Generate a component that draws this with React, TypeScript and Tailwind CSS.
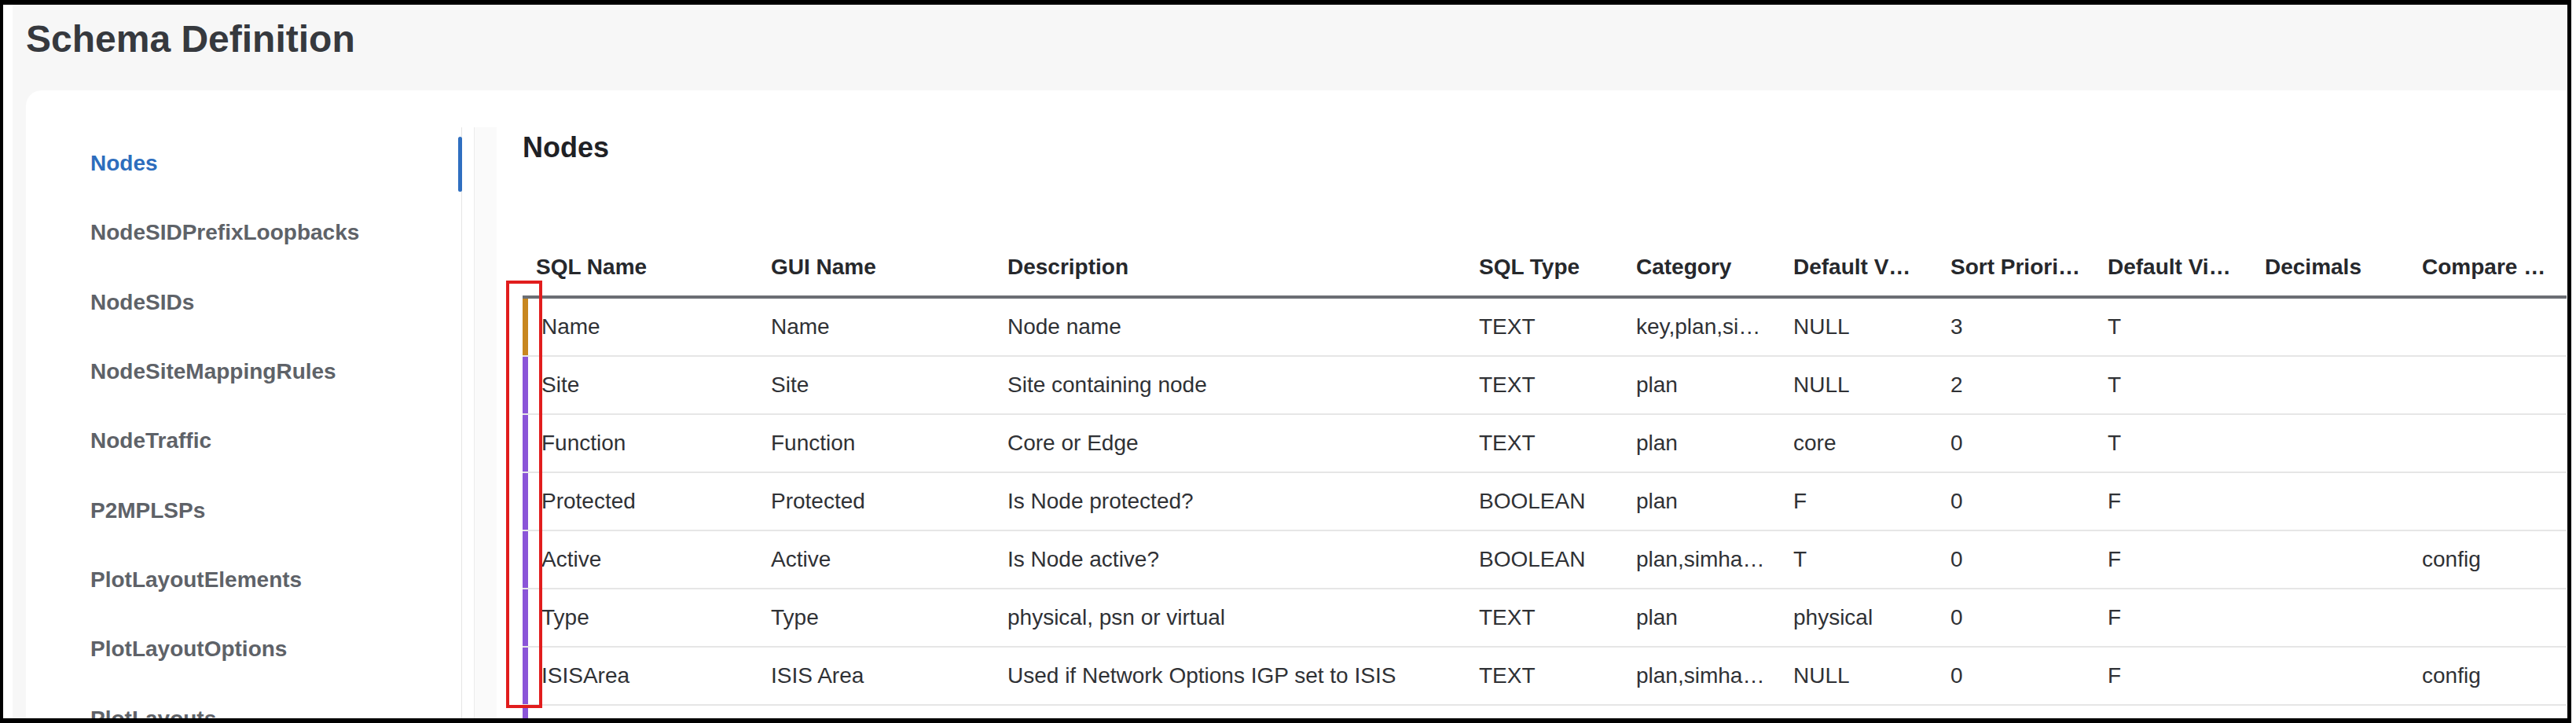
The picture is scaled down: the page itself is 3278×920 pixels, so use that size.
import React from 'react';

const navItems = [
  'Nodes',
  'NodeSIDPrefixLoopbacks',
  'NodeSIDs',
  'NodeSiteMappingRules',
  'NodeTraffic',
  'P2MPLSPs',
  'PlotLayoutElements',
  'PlotLayoutOptions',
  'PlotLayouts',
];

const columns = [
  { label: 'SQL Name', width: 'w-[300px]' },
  { label: 'GUI Name', width: 'w-[301px]' },
  { label: 'Description', width: 'w-[600px]' },
  { label: 'SQL Type', width: 'w-[200px]' },
  { label: 'Category', width: 'w-[200px]' },
  { label: 'Default V…', width: 'w-[200px]' },
  { label: 'Sort Priori…', width: 'w-[200px]' },
  { label: 'Default Vi…', width: 'w-[200px]' },
  { label: 'Decimals', width: 'w-[200px]' },
  { label: 'Compare …', width: 'w-[200px]' },
  { label: '', width: 'w-[200px]' },
];

type Row = { key: boolean; cells: string[] };

const rows: Row[] = [
  { key: true, cells: ['Name', 'Name', 'Node name', 'TEXT', 'key,plan,si…', 'NULL', '3', 'T', '', '', ''] },
  { key: false, cells: ['Site', 'Site', 'Site containing node', 'TEXT', 'plan', 'NULL', '2', 'T', '', '', ''] },
  { key: false, cells: ['Function', 'Function', 'Core or Edge', 'TEXT', 'plan', 'core', '0', 'T', '', '', ''] },
  { key: false, cells: ['Protected', 'Protected', 'Is Node protected?', 'BOOLEAN', 'plan', 'F', '0', 'F', '', '', ''] },
  { key: false, cells: ['Active', 'Active', 'Is Node active?', 'BOOLEAN', 'plan,simha…', 'T', '0', 'F', '', 'config', ''] },
  { key: false, cells: ['Type', 'Type', 'physical, psn or virtual', 'TEXT', 'plan', 'physical', '0', 'F', '', '', ''] },
  { key: false, cells: ['ISISArea', 'ISIS Area', 'Used if Network Options IGP set to ISIS', 'TEXT', 'plan,simha…', 'NULL', '0', 'F', '', 'config', ''] },
  // next row only peeks in under the bottom edge
  { key: false, cells: ['', '', '', '', '', '', '', '', '', '', ''] },
];

function Sidebar() {
  return (
    <nav className="w-[555px] shrink-0 border-r border-[#e5e5e5] pt-[2px]">
      {navItems.map((item, i) => (
        <div key={item} className="relative h-[88.3px] flex items-center pl-[82px]">
          <span
            className={`text-[28px] font-bold whitespace-nowrap ${i === 0 ? 'text-[#2d6dbd]' : 'text-[#5e6268]'}`}
          >
            {item}
          </span>
          {i === 0 && (
            <div className="absolute right-[-1px] top-[10px] h-[70px] w-[5px] rounded-full bg-[#2f6fc0]" />
          )}
        </div>
      ))}
    </nav>
  );
}

function SchemaTable() {
  return (
    <div className="w-[2601px]">
      {/* header */}
      <div className="flex h-[76px] items-center border-b-[4px] border-[#6b6e74]">
        {columns.map((col, i) => (
          <div
            key={i}
            className={`${col.width} shrink-0 whitespace-nowrap text-[28px] font-bold text-[#26282c] ${i === 0 ? 'pl-[17px]' : 'pl-[16px]'}`}
          >
            {col.label}
          </div>
        ))}
      </div>

      {/* rows */}
      {rows.map((row, r) => (
        <div key={r} className="flex h-[74px] border-b-2 border-[#e6e6e6]">
          {row.cells.map((cell, i) =>
            i === 0 ? (
              <div key={i} className={`${columns[i].width} shrink-0 flex items-stretch`}>
                <div className={`w-[7px] shrink-0 ${row.key ? 'bg-[#c8871f]' : 'bg-[#8b55d8]'}`} />
                <div className="flex items-center pl-[17px] text-[28px] text-[#2f3135] whitespace-nowrap">
                  {cell}
                </div>
              </div>
            ) : (
              <div
                key={i}
                className={`${columns[i].width} shrink-0 flex items-center pl-[16px] text-[28px] text-[#2f3135] whitespace-nowrap`}
              >
                {cell}
              </div>
            )
          )}
        </div>
      ))}
    </div>
  );
}

export default function App() {
  return (
    <div className="w-[3278px] h-[920px] overflow-hidden bg-white font-['Liberation_Sans',Arial,sans-serif]">
      <div className="relative w-[3272px] h-[920px] overflow-hidden bg-white border-black border-t-[6px] border-l-[4px] border-r-[5px] border-b-[6px]">
        <div className="ml-[12px] h-full bg-[#f7f7f7] pt-[20px] pl-[17px]">
          <h1 className="h-[48px] text-[48px] leading-[48px] font-bold text-[#36393e] whitespace-nowrap">
            Schema Definition
          </h1>

          {/* card */}
          <div className="mt-[41px] w-[3300px] h-[820px] rounded-tl-[20px] bg-white pt-[47px] flex">
            <Sidebar />
            <div className="w-[15px] shrink-0" />
            <div className="w-[29px] shrink-0 border-l border-[#ebebeb] bg-[#fafafa]" />
            <main className="flex-1 pl-[33px] pt-[8px]">
              <h2 className="h-[36px] text-[36px] leading-[36px] font-bold text-[#1f2125]">Nodes</h2>
              <div className="mt-[98px]">
                <SchemaTable />
              </div>
            </main>
          </div>
        </div>

        {/* red annotation */}
        <div className="absolute left-[640px] top-[351px] w-[46px] h-[544px] border-[4px] border-[#e11d1d]" />
      </div>
    </div>
  );
}
